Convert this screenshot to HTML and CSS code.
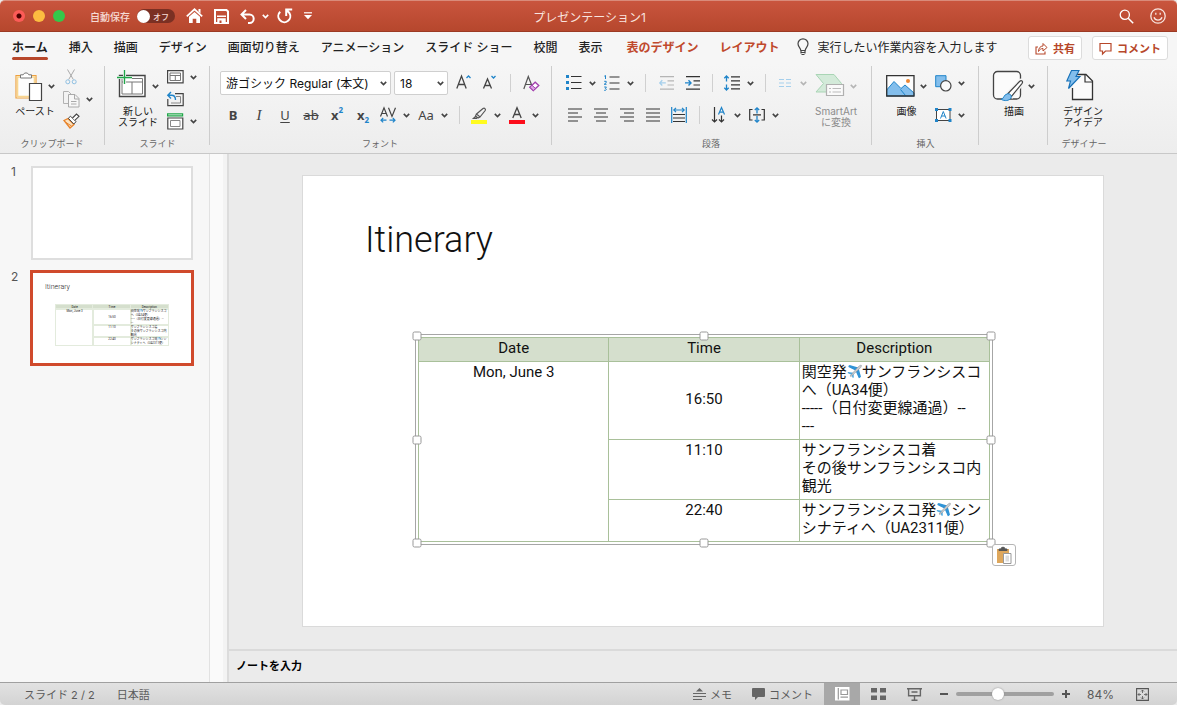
FILE: index.html
```html
<!DOCTYPE html>
<html lang="ja">
<head>
  <meta charset="UTF-8" />
  <meta name="viewport" content="width=device-width, initial-scale=1" />
  <title>プレゼンテーション1</title>
  <link rel="stylesheet" href="styles.css">
</head>
<body>
  <svg class="sprite" aria-hidden="true">
    <symbol id="caret" viewBox="0 0 7 5"><path d="M0.8 0.9 3.5 3.6 6.2 0.9" fill="none" stroke="currentColor" stroke-width="1.6"/></symbol>
    <symbol id="plane" viewBox="0 0 16 16">
      <path d="M9 7 1.5 3.2 3 2.2 11.5 4.2zM9 7l3.6 8.3 1.2-1.2L12 5z" fill="#2f93d6"/>
      <path d="M9.500 6.500 1 2.500 2.800 1 12 3.600zM9.500 6.500l3.800 8.800 1.600-1.700-2.500-9.200z" fill="#2f93d6"/>
      <path d="M6.8 9.3 1.2 8.6.6 9.6 4.6 11.4 6.2 15l1-.6-.2-4.8z" fill="#4aa8e0"/>
      <path d="M3.2 12.8 12 3c1.2-1.3 2.9-2 3.3-1.6.4.4-.3 2.1-1.6 3.3L4.2 13.4z" fill="#c9ced3" stroke="#8b9299" stroke-width=".6"/>
    </symbol>
  </svg>

  <!-- Title bar -->
  <header class="titlebar">
    <div class="titlebar-left">
      <div class="lights">
        <button class="light close" aria-label="閉じる"></button>
        <button class="light minimize" aria-label="しまう"></button>
        <button class="light zoom" aria-label="フルスクリーン"></button>
      </div>
      <label class="autosave">自動保存
        <span class="toggle"><input type="checkbox" role="switch"><span>オフ</span></span>
      </label>
      <button class="title-btn" aria-label="ホーム"><svg width="17" height="16" viewBox="0 0 17 16"><path d="M.8 8.3 8.5 1.3l7.7 7" fill="none" stroke="#fff" stroke-width="1.8"/><path d="M3 8.8 8.5 4 14 8.8V15h-3.700v-4.200H6.700V15H3z" fill="#fff"/><path d="M12.500 1h2v4.500l-2-1.800z" fill="#fff"/></svg></button>
      <button class="title-btn" aria-label="保存"><svg width="15" height="15" viewBox="0 0 15 15"><path d="M1 1h11.500L14 2.500V14H1z" fill="none" stroke="#fff" stroke-width="2"/><path d="M3 7.200h9M4 10h7v4H4z" stroke="#fff" stroke-width="1.500" fill="#fff"/><path d="M5.500 11.500h2V14h-2z" fill="#bd4b32"/></svg></button>
      <div class="undo">
        <button class="title-btn" aria-label="元に戻す"><svg width="16" height="15" viewBox="0 0 16 15"><path d="M6 1 1.500 5.500 6 10M2 5.500h7.500a4.200 4.200 0 0 1 0 8.400H8" fill="none" stroke="#fff" stroke-width="2"/></svg></button>
        <button class="title-btn" aria-label="元に戻す履歴"><svg width="7" height="5"><use href="#caret"/></svg></button>
      </div>
      <button class="title-btn" aria-label="やり直し"><svg width="16" height="16" viewBox="0 0 16 16"><path d="M3.200 3.800a6 6 0 1 0 9.200 1.200L9.800 2M9.200 8V1.500h6" fill="none" stroke="#fff" stroke-width="2"/></svg></button>
      <button class="title-btn" aria-label="カスタマイズ"><svg width="8" height="8" viewBox="0 0 8 8"><path d="M0 .8h8" stroke="#fff" stroke-width="1.200"/><path d="M0 3h8L4 7.200z" fill="#fff"/></svg></button>
    </div>
    <h1 class="doc-title">プレゼンテーション1</h1>
    <div class="titlebar-right">
      <button class="title-btn" aria-label="検索"><svg width="15" height="15" viewBox="0 0 15 15"><circle cx="5.800" cy="5.800" r="4.600" fill="none" stroke="#fff" stroke-width="1.300"/><path d="m9.200 9.200 5 5" stroke="#fff" stroke-width="1.500"/></svg></button>
      <button class="title-btn" aria-label="フィードバック"><svg width="16" height="16" viewBox="0 0 16 16"><circle cx="8" cy="8" r="7.200" fill="none" stroke="#f7e4df" stroke-width="1.300"/><path d="M5.800 4.800v2M10.200 4.800v2M4 9.200c1.200 3.800 6.800 3.800 8 0" fill="none" stroke="#f7e4df" stroke-width="1.300"/></svg></button>
    </div>
  </header>

  <!-- Tabs -->
  <div class="tabbar">
    <nav class="tabs">
      <button class="tab active">ホーム</button>
      <button class="tab">挿入</button>
      <button class="tab">描画</button>
      <button class="tab">デザイン</button>
      <button class="tab">画面切り替え</button>
      <button class="tab">アニメーション</button>
      <button class="tab">スライド ショー</button>
      <button class="tab">校閲</button>
      <button class="tab">表示</button>
    </nav>
    <nav class="tabs contextual">
      <button class="tab">表のデザイン</button>
      <button class="tab">レイアウト</button>
    </nav>
    <label class="tell-me">
      <svg width="12" height="18" viewBox="0 0 12 18"><path d="M3.800 12.500C3.800 10 1 9 1 5.800a5 5 0 0 1 10 0C11 9 8.200 10 8.200 12.500zM4 14.500h4M4.500 16.500h3M4 12.500v3M8 12.500v3" fill="none" stroke="#444" stroke-width="1.200"/></svg>
      <input type="text" placeholder="実行したい作業内容を入力します" aria-label="操作アシスト">
    </label>
    <div class="tab-actions">
      <button class="action"><svg width="13" height="13" viewBox="0 0 13 13"><path d="M3 5H1v7h9V9.500" fill="none" stroke="#b7472a" stroke-width="1.100"/><path d="M3.500 9.500C3.500 6 5.500 4 8 4V1.500L12 5.500 8 9V6.500C6 6.500 4.500 7.500 3.500 9.500z" fill="none" stroke="#b7472a"/></svg>共有</button>
      <button class="action"><svg width="13" height="13" viewBox="0 0 13 13"><path d="M1 1.500h11v7.500H6.500L3.500 12V9H1z" fill="none" stroke="#b7472a" stroke-width="1.200"/></svg>コメント</button>
    </div>
  </div>

  <!-- Ribbon -->
  <div class="ribbon">
    <section class="group clipboard">
      <div class="group-body">
        <button class="big">
          <span class="big-icon">
            <svg width="28" height="30" viewBox="0 0 28 30"><path d="M1 4.500h20V27H1z" fill="#fdfdfd" stroke="#eda03f" stroke-width="1.200"/><path d="M2.500 6h17v19.500h-17z" fill="none" stroke="#f8d68f" stroke-width="1.600"/><path d="M5.500 7V3.800h2.700a3 3 0 0 1 5.600 0h2.700V7z" fill="#fff" stroke="#777"/><path d="M14.500 12.500h12v17h-12z" fill="#fff" stroke="#444" stroke-width="1.200"/></svg>
            <svg class="caret" width="7" height="5"><use href="#caret"/></svg>
          </span>
          ペースト
        </button>
        <div class="small-col">
          <button class="small" aria-label="切り取り"><svg width="17" height="16" viewBox="0 0 17 16"><path d="M4.500.5l5.800 10M11.500.5l-5.800 10" fill="none" stroke="#aaa"/><circle cx="4.800" cy="12.800" r="2" fill="none" stroke="#8fc0e2"/><circle cx="11.200" cy="12.800" r="2" fill="none" stroke="#8fc0e2"/></svg></button>
          <button class="small" aria-label="コピー"><svg width="17" height="17" viewBox="0 0 17 17"><path d="M5 12.500H.5V.5h5l3 3" fill="none" stroke="#b2b2b2"/><path d="M5.500 3.500h6.500l4 4v8.500H5.500zM11.500 3.500v4.500H16M8 10.500h5.500M8 13h5.500" fill="#f7f7f7" stroke="#aaa"/></svg><svg class="caret" width="7" height="5"><use href="#caret"/></svg></button>
          <button class="small" aria-label="書式のコピー"><svg width="17" height="16" viewBox="0 0 17 16"><path d="M1 7.500 5 5.500l6 6L7 15z" fill="#fbe3c2" stroke="#e8832a" stroke-width="1.300"/><path d="M3 9.500 8.500 13" stroke="#e8832a"/><path d="M5.300 5.300 7.500 3.200l5.500 5.500-2.200 2.300z" fill="#fff" stroke="#444"/><path d="m9.500 5 4-4L16 3.300l-4.200 4" fill="#fff" stroke="#444" stroke-width="1.100"/></svg></button>
        </div>
      </div>
      <h2 class="group-label">クリップボード</h2>
    </section>

    <section class="group slides">
      <div class="group-body">
        <button class="big">
          <span class="big-icon">
            <svg width="30" height="30" viewBox="0 0 30 30"><path d="M2.500 4.500h25.500v21H2.500z" fill="#fff" stroke="#444" stroke-width="1.400"/><path d="M5 7.500h20.500v15.500H5zM5 11h20.500M15 11v12" fill="none" stroke="#777"/><path d="M7.500 0v13M0 6.500h15" stroke="#f5f5f5" stroke-width="3"/><path d="M7.500-1v14M0 6.500h15" stroke="#1fa648" stroke-width="1.300"/></svg>
            <svg class="caret" width="7" height="5"><use href="#caret"/></svg>
          </span>
          新しい<br>スライド
        </button>
        <div class="small-col">
          <button class="small" aria-label="レイアウト"><svg width="17" height="14" viewBox="0 0 17 14"><path d="M.6.600h15.500v12.300H.6z" fill="#fff" stroke="#444" stroke-width="1.200"/><path d="M3 3h10.500v7.500H3zM3 5.500h10.500M8.300 5.500v5" fill="none" stroke="#777"/></svg><svg class="caret" width="7" height="5"><use href="#caret"/></svg></button>
          <button class="small" aria-label="リセット"><svg width="17" height="15" viewBox="0 0 17 15"><path d="M8 1.600h8.200v12H.8V7" fill="none" stroke="#444" stroke-width="1.200"/><path d="M9 4.500h4.500V11H4" fill="none" stroke="#888"/><path d="M4 0 .8 3.300 4 6.500M1 3.300h3.500c2.500 0 4 1.700 4 4.700" fill="none" stroke="#1f84c9" stroke-width="1.400"/></svg></button>
          <button class="small" aria-label="セクション"><svg width="17" height="17" viewBox="0 0 17 17"><path d="M.6.800h15v2H.6z" fill="#fff" stroke="#1fa648" stroke-width="1.200"/><path d="M.8 5h15v11H.8z" fill="#fff" stroke="#444" stroke-width="1.200"/><path d="M3.500 7.500H13V13.500H3.500z" fill="none" stroke="#888"/></svg><svg class="caret" width="7" height="5"><use href="#caret"/></svg></button>
        </div>
      </div>
      <h2 class="group-label">スライド</h2>
    </section>

    <section class="group font">
      <div class="group-body rows">
        <div class="row top">
          <span class="select-wrap family">
            <select aria-label="フォント名"><option>游ゴシック Regular (本文)</option></select>
            <svg class="caret" width="7" height="5"><use href="#caret"/></svg>
          </span>
          <span class="select-wrap size">
            <select aria-label="フォント サイズ"><option>18</option></select>
            <svg class="caret" width="7" height="5"><use href="#caret"/></svg>
          </span>
          <button class="tool" aria-label="フォントの拡大"><svg width="16" height="16" viewBox="0 0 16 16"><path d="M.8 13.500 5.500 1 10.200 13.500M2.500 9.500h6" fill="none" stroke="#444" stroke-width="1.300"/><path d="m10.500 3 2-2 2 2" fill="none" stroke="#1f84c9" stroke-width="1.300"/></svg></button>
          <button class="tool" aria-label="フォントの縮小"><svg width="16" height="16" viewBox="0 0 16 16"><path d="M1.500 13.500 5.500 4 9.500 13.500M3 10.500h5" fill="none" stroke="#444" stroke-width="1.300"/><path d="m9.500 1 2 2 2-2" fill="none" stroke="#1f84c9" stroke-width="1.300"/></svg></button>
          <span class="sep"></span>
          <button class="tool" aria-label="書式のクリア"><svg width="17" height="17" viewBox="0 0 17 17"><path d="M.8 14 5.300 1.500 9 11M2.500 9.500h6" fill="none" stroke="#555" stroke-width="1.200"/><path d="m6.800 12.200 5.400-5 3.600 3.400-5.500 5z" fill="#fff" stroke="#a33fae" stroke-width="1.300"/><path d="m6.800 12.200 2.200-2 3.500 3.400-2.200 2z" fill="#dba6e2" stroke="#a33fae"/></svg></button>
        </div>
        <div class="row bottom">
          <button class="tool text bold">B</button>
          <button class="tool text italic">I</button>
          <button class="tool text underline">U</button>
          <button class="tool text strike">ab</button>
          <button class="tool text script">x<sup>2</sup></button>
          <button class="tool text script">x<sub>2</sub></button>
          <button class="split" aria-label="文字の間隔"><svg width="16" height="16" viewBox="0 0 16 16"><path d="M.5 9.500 4 .8l3.500 8.700M1.800 6.500h4.400M8.500.800 12 9.500 15.500.8" fill="none" stroke="#444" stroke-width="1.200"/><path d="M1 13.200h5.500M3.200 11 1 13.200l2.200 2.200M9.500 13.200H15M12.800 11l2.200 2.200-2.200 2.200" fill="none" stroke="#1f84c9" stroke-width="1.200"/></svg><svg class="caret" width="7" height="5"><use href="#caret"/></svg></button>
          <button class="split text case"><span>Aa</span><svg class="caret" width="7" height="5"><use href="#caret"/></svg></button>
          <span class="sep"></span>
          <button class="split" aria-label="蛍光ペン"><svg width="16" height="17" viewBox="0 0 16 17"><path d="m5.500 7 6.500-5.500c1.500-1 3 .5 2.200 2L9 10zM5.500 7 4.500 9 7 11l2-1M4.500 9.500 2.500 11.300H6" fill="none" stroke="#555" stroke-width="1.200"/><path d="M0 13h16v4H0z" fill="#fffb1f"/></svg><svg class="caret" width="7" height="5"><use href="#caret"/></svg></button>
          <button class="split" aria-label="フォントの色"><svg width="16" height="17" viewBox="0 0 16 17"><path d="M3.800 11 8 .8 12.200 11M5.300 7.500h5.400" fill="none" stroke="#444" stroke-width="1.300"/><path d="M0 13h16v4H0z" fill="#fc0d1b"/></svg><svg class="caret" width="7" height="5"><use href="#caret"/></svg></button>
        </div>
      </div>
      <h2 class="group-label">フォント</h2>
    </section>

    <section class="group paragraph">
      <div class="group-body">
        <div class="rows">
          <div class="row top">
            <button class="split" aria-label="箇条書き"><svg width="16" height="16" viewBox="0 0 16 16"><path d="M0 0h3v3H0zM0 6h3v3H0zM0 12h3v3H0z" fill="#1f84c9"/><path d="M5 1.500h10.500M5 7.500h10.500M5 13.500h10.500" stroke="#333" stroke-width="1.200"/></svg><svg class="caret" width="7" height="5"><use href="#caret"/></svg></button>
            <button class="split" aria-label="段落番号"><svg width="16" height="17" viewBox="0 0 16 17"><path d="M.3 1.200 1.500.5V4M.2 6.300h2v1.400l-2 1.600h2.300M.2 12h2.200l-1 1.500c1.500.2 1.200 2.300-1.200 1.800" fill="none" stroke="#1f84c9"/><path d="M5.500 2h10M5.500 8h10M5.500 14h10" stroke="#333" stroke-width="1.200"/></svg><svg class="caret" width="7" height="5"><use href="#caret"/></svg></button>
            <span class="sep"></span>
            <button class="tool" aria-label="インデントを減らす" disabled><svg width="15" height="14" viewBox="0 0 15 14"><path d="M1 .600h14M8.500 4.800H15M8.500 9H15M1 13.200h14" stroke="#b5b5b5" stroke-width="1.200"/><path d="M.8 6.900h6M3.300 4.300.8 6.900l2.500 2.600" fill="none" stroke="#a5cfec" stroke-width="1.300"/></svg></button>
            <button class="tool" aria-label="インデントを増やす"><svg width="15" height="14" viewBox="0 0 15 14"><path d="M1 .600h14M8.500 4.800H15M8.500 9H15M1 13.200h14" stroke="#333" stroke-width="1.200"/><path d="M0 6.900h6M3.500 4.300 6 6.900 3.500 9.500" fill="none" stroke="#1f84c9" stroke-width="1.400"/></svg></button>
            <span class="sep"></span>
            <button class="split" aria-label="行間"><svg width="16" height="16" viewBox="0 0 16 16"><path d="M2.500 6.500V1M.3 3.200 2.500 1l2.200 2.200M2.500 9.500V15M.3 12.800 2.500 15l2.200-2.200" fill="none" stroke="#1f84c9" stroke-width="1.300"/><path d="M7 1.800h9M7 5.800h9M7 9.800h9M7 13.800h9" stroke="#333" stroke-width="1.200"/></svg><svg class="caret" width="7" height="5"><use href="#caret"/></svg></button>
            <span class="sep"></span>
            <button class="split" aria-label="段組み" disabled><svg width="16" height="8" viewBox="0 0 16 8"><path d="M2 .5h5M2 4h5M2 7.500h5M9 .5h5M9 4h5M9 7.500h5" stroke="#a5cfec" stroke-width="1.200"/></svg><svg class="caret" width="7" height="5"><use href="#caret"/></svg></button>
          </div>
          <div class="row bottom">
            <button class="tool" aria-label="左揃え"><svg width="14" height="14" viewBox="0 0 14 14"><path d="M0 1h14M0 5h10M0 9h14M0 13h10" stroke="#333" stroke-width="1.200"/></svg></button>
            <button class="tool" aria-label="中央揃え"><svg width="14" height="14" viewBox="0 0 14 14"><path d="M0 1h14M2 5h10M0 9h14M2 13h10" stroke="#333" stroke-width="1.200"/></svg></button>
            <button class="tool" aria-label="右揃え"><svg width="14" height="14" viewBox="0 0 14 14"><path d="M0 1h14M4 5h10M0 9h14M4 13h10" stroke="#333" stroke-width="1.200"/></svg></button>
            <button class="tool" aria-label="両端揃え"><svg width="14" height="14" viewBox="0 0 14 14"><path d="M0 1h14M0 5h14M0 9h14M0 13h14" stroke="#333" stroke-width="1.200"/></svg></button>
            <button class="tool" aria-label="均等割り付け"><svg width="16" height="16" viewBox="0 0 16 16"><path d="M.7 0v16M15.300 0v16M3 3h10M5 .8 2.800 3 5 5.200M11 .8 13.200 3 11 5.200" fill="none" stroke="#1f84c9" stroke-width="1.200"/><path d="M2 7.500h12M2 11h12M2 14.500h12" stroke="#333" stroke-width="1.200"/></svg></button>
            <span class="sep"></span>
            <button class="split" aria-label="文字列の方向"><svg width="16" height="16" viewBox="0 0 16 16"><path d="M3.500 0v15M1 12.500 3.500 15 6 12.500M10.500 8.500V15M8 12.500l2.500 2.500 2.500-2.500" fill="none" stroke="#333" stroke-width="1.200"/><path d="m7.500 7.500 3-7 3 7M8.500 5.200h4" fill="none" stroke="#1f84c9" stroke-width="1.200"/></svg><svg class="caret" width="7" height="5"><use href="#caret"/></svg></button>
            <button class="split" aria-label="文字の配置"><svg width="16" height="16" viewBox="0 0 16 16"><path d="M3.500 2.500H.7v10.500h2.800M12.500 2.500h2.800v10.500h-2.800M4 7.800h8" fill="none" stroke="#333" stroke-width="1.200"/><path d="M8 6.500V.800M5.800 3 8 .8 10.200 3M8 9v6M5.800 13 8 15.200l2.200-2.200" fill="none" stroke="#1f84c9" stroke-width="1.300"/></svg><svg class="caret" width="7" height="5"><use href="#caret"/></svg></button>
          </div>
        </div>
        <button class="big" disabled>
          <span class="big-icon">
            <svg width="30" height="30" viewBox="0 0 30 30"><path d="M1 3.500h18l7.500 9-7.500 8.500H1l7.500-8.500z" fill="#d3ead9" stroke="#a9d5b5"/><path d="M11.500 13.500h17v11h-17z" fill="#fafafa" stroke="#b0b0b0" stroke-width="1.200"/><path d="M14 17.500h2M17.500 17.500H26M14 21h2M17.500 21H26" stroke="#bbb"/></svg>
            <svg class="caret" width="7" height="5"><use href="#caret"/></svg>
          </span>
          SmartArt<br>に変換
        </button>
      </div>
      <h2 class="group-label">段落</h2>
    </section>

    <section class="group insert">
      <div class="group-body">
        <button class="big">
          <span class="big-icon">
            <svg width="29" height="22" viewBox="0 0 29 22"><path d="M.7.700h27.300v20.300H.7z" fill="#fdfdfd"/><path d="M.7 15 8 6.500l7 7 4-3.500 9 8v3H.7z" fill="#83beec" stroke="#1f84c9"/><path d="m14.500 14.500 5 6" stroke="#1f84c9"/><circle cx="22" cy="6" r="2" fill="#ed8733"/><path d="M.7.700h27.300v20.300H.7z" fill="none" stroke="#333" stroke-width="1.300"/></svg>
            <svg class="caret" width="7" height="5"><use href="#caret"/></svg>
          </span>
          画像
        </button>
        <div class="rows">
          <div class="row top"><button class="small" aria-label="図形"><svg width="17" height="17" viewBox="0 0 17 17"><path d="M.7.700h10.300v11H.7z" fill="#83beec" stroke="#1f84c9"/><circle cx="10.800" cy="10.800" r="5.200" fill="#fafafa" stroke="#444" stroke-width="1.200"/></svg><svg class="caret" width="7" height="5"><use href="#caret"/></svg></button></div>
          <div class="row bottom"><button class="small" aria-label="テキスト ボックス"><svg width="17" height="14" viewBox="0 0 17 14"><path d="M1.500 1.500h13.500v11H1.500z" fill="#fff" stroke="#444"/><path d="M0 0h3v3H0zM13.500 0h3v3h-3zM0 11h3v3H0zM13.500 11h3v3h-3z" fill="#1f84c9"/><path d="m5.500 10.500 2.800-7 2.800 7M6.500 8h3.600" fill="none" stroke="#1f84c9"/></svg><svg class="caret" width="7" height="5"><use href="#caret"/></svg></button></div>
        </div>
      </div>
      <h2 class="group-label">挿入</h2>
    </section>

    <section class="group drawing">
      <div class="group-body">
        <button class="big">
          <span class="big-icon">
            <svg width="30" height="30" viewBox="0 0 30 30"><path d="M24 28H4.500a4 4 0 0 1-4-4V4.500a4 4 0 0 1 4-4h19a4 4 0 0 1 4 4V24a4 4 0 0 1-4 4" fill="#fbfbfb" stroke="#444" stroke-width="1.300"/><path d="M15 22.500 26.500 10.500c2-1.800 3.800-.2 2.600 1.800L19 25z" fill="#fff" stroke="#f5f5f5" stroke-width="4"/><path d="M15 22.500 26.500 10.500c2-1.800 3.800-.2 2.600 1.800L18.500 25.500z" fill="#fff" stroke="#444" stroke-width="1.200"/><path d="M8 28.300c3 0 2.500-5 6.500-5.500 3-.3 4.500 2 3.500 4-1.500 3.200-6.500 3.500-10 1.500z" fill="#83beec" stroke="#1f84c9"/></svg>
            <svg class="caret" width="7" height="5"><use href="#caret"/></svg>
          </span>
          描画
        </button>
      </div>
    </section>

    <section class="group designer">
      <div class="group-body">
        <button class="big">
          <span class="big-icon">
            <svg width="34" height="32" viewBox="0 0 34 32"><path d="M9 4.500h11l6.500 6.500v18.500H6.500V18" fill="#fbfbfb" stroke="#333" stroke-width="1.300"/><path d="M19 4v8h7.500" fill="none" stroke="#333" stroke-width="1.200"/><path d="M5.500.5h7.500l-3 6h4L2.500 18.500 4.500 11H.8z" fill="#83beec" stroke="#1570b8" stroke-width="1.100"/></svg>
          </span>
          デザイン<br>アイデア
        </button>
      </div>
      <h2 class="group-label">デザイナー</h2>
    </section>
  </div>

  <!-- Workspace -->
  <main class="workspace">
    <aside class="thumbs">
      <ol class="thumb-list">
        <li class="thumb"><span class="thumb-no">1</span><div class="thumb-slide"></div></li>
        <li class="thumb selected"><span class="thumb-no">2</span>
          <div class="thumb-slide">
            <p class="thumb-title">Itinerary</p>
            <table class="thumb-table">
              <tr><th>Date</th><th>Time</th><th>Description</th></tr>
              <tr><td rowspan="3">Mon, June 3</td><td class="middle">16:50</td><td>関空発<svg class="plane" role="img" aria-label="飛行機"><use href="#plane"/></svg>サンフランシスコ<br>へ（UA34便）<br>-----（日付変更線通過）--<br>---</td></tr>
              <tr><td>11:10</td><td>サンフランシスコ着<br>その後サンフランシスコ内<br>観光</td></tr>
              <tr><td>22:40</td><td>サンフランシスコ発<svg class="plane" role="img" aria-label="飛行機"><use href="#plane"/></svg>シン<br>シナティへ（UA2311便）</td></tr>
            </table>
          </div>
        </li>
      </ol>
    </aside>
    <div class="gutter"></div>
    <div class="editor">
      <div class="canvas">
        <article class="slide">
          <h2 class="slide-title">Itinerary</h2>
          <div class="table-frame">
            <table class="itinerary">
              <tr><th>Date</th><th>Time</th><th>Description</th></tr>
              <tr><td rowspan="3">Mon, June 3</td><td class="middle">16:50</td><td>関空発<svg class="plane" role="img" aria-label="飛行機"><use href="#plane"/></svg>サンフランシスコ<br>へ（UA34便）<br>-----（日付変更線通過）--<br>---</td></tr>
              <tr><td>11:10</td><td>サンフランシスコ着<br>その後サンフランシスコ内<br>観光</td></tr>
              <tr><td>22:40</td><td>サンフランシスコ発<svg class="plane" role="img" aria-label="飛行機"><use href="#plane"/></svg>シン<br>シナティへ（UA2311便）</td></tr>
            </table>
            <div class="handles">
              <i class="handle nw"></i><i class="handle n"></i><i class="handle ne"></i>
              <i class="handle w"></i><i class="handle e"></i>
              <i class="handle sw"></i><i class="handle s"></i><i class="handle se"></i>
            </div>
            <button class="paste-options" aria-label="貼り付けのオプション"><svg width="15" height="17" viewBox="0 0 15 17"><path d="M0 2h12v14H0z" fill="#dea75c"/><path d="M2 3.500V2h2a2 1.800 0 0 1 4 0h2v1.500z" fill="#555" stroke="#555"/><path d="M6.500 6.500H14V16.500H6.500z" fill="#fff" stroke="#999"/><path d="M8.500 8.500H12V14.500H8.500z" fill="#ddd"/></svg></button>
          </div>
        </article>
      </div>
      <div class="notes">ノートを入力</div>
    </div>
  </main>

  <!-- Status bar -->
  <footer class="statusbar">
    <span>スライド 2 / 2</span>
    <span>日本語</span>
    <div class="status-right">
      <button class="status-btn"><svg width="13" height="12" viewBox="0 0 13 12"><path d="M0 5.500h13M0 8.500h13M0 11.500h9" stroke="#666" stroke-width="1.200"/><path d="m3 3.500 3.500-3.500L10 3.500z" fill="#666"/></svg>メモ</button>
      <button class="status-btn"><svg width="13" height="12" viewBox="0 0 13 12"><path d="M1 0h11a1 1 0 0 1 1 1v7a1 1 0 0 1-1 1H6l-3 3V9H1a1 1 0 0 1-1-1V1a1 1 0 0 1 1-1z" fill="#666"/></svg>コメント</button>
      <div class="views">
        <button class="view active" aria-label="標準表示"><svg width="15" height="14" viewBox="0 0 15 14"><path d="M0 0h14.500v13.500H0z" fill="#fff"/><path d="M3.300 1v11.500M6 3h6.500v4.500H6zM5.500 10.200H13" fill="none" stroke="#999" stroke-width="1.200"/></svg></button>
        <button class="view" aria-label="スライド一覧"><svg width="15" height="12" viewBox="0 0 15 12"><path d="M0 0h6v4.500H0zM9 0h6v4.500H9zM0 7.500h6V12H0zM9 7.500h6V12H9z" fill="#666"/></svg></button>
        <button class="view" aria-label="スライド ショー"><svg width="15" height="13" viewBox="0 0 15 13"><path d="M0 .800h15M1.600 1v6.800h11.800V1M4.500 4h6M7.500 8v4M4.500 12.200h6" fill="none" stroke="#666" stroke-width="1.400"/></svg></button>
      </div>
      <button class="zoom-btn" aria-label="縮小"><svg width="8" height="8" viewBox="0 0 8 8"><path d="M0 4h8" stroke="#555" stroke-width="2"/></svg></button>
      <input class="zoom-slider" type="range" min="0" max="100" value="42" aria-label="ズーム">
      <button class="zoom-btn" aria-label="拡大"><svg width="8" height="8" viewBox="0 0 8 8"><path d="M0 4h8M4 0v8" stroke="#555" stroke-width="2"/></svg></button>
      <span class="zoom-value">84%</span>
      <button class="zoom-btn" aria-label="ウィンドウに合わせる"><svg width="13" height="13" viewBox="0 0 13 13"><path d="M.6.600h11.800v11.800H.6z" fill="none" stroke="#555" stroke-width="1.100"/><path d="M6.500 2v3M5 3.500 6.500 2 8 3.500M6.500 11V8M5 9.500 6.500 11 8 9.500M2 6.500h3M3.500 5 2 6.500 3.500 8M11 6.500H8M9.500 5 11 6.500 9.500 8" fill="none" stroke="#555" stroke-width=".8"/></svg></button>
    </div>
  </footer>
</body>
</html>
```
FILE: styles.css
```css
* {
  box-sizing: border-box;
}
body {
  margin: 0;
  height: 100vh;
  display: flex;
  flex-direction: column;
  font-family: Inter, "Noto Sans CJK JP", sans-serif;
  font-size: 12px;
  color: #222;
  background: #ebebeb;
  overflow: hidden;
}
h1, h2, p, ol {
  margin: 0;
  padding: 0;
}
button, input, select {
  font: inherit;
  color: inherit;
  border: 0;
  margin: 0;
  padding: 0;
  background: none;
}
svg {
  display: block;
  flex: none;
  overflow: visible;
}
.sprite {
  position: absolute;
  width: 0;
  height: 0;
}

/* title bar */
.titlebar {
  flex: none;
  height: 32px;
  display: grid;
  grid-template-columns: 1fr auto 1fr;
  align-items: center;
  padding: 0 11px 0 13px;
  background: linear-gradient(#c9553e, #b6472d);
  border-top: 1px solid #d98b7a;
  border-bottom: 1px solid #9c3a24;
  border-radius: 5px 5px 0 0;
  color: #fff;
}
.titlebar-left, .titlebar-right {
  display: flex;
  align-items: center;
}
.titlebar-left {
  gap: 11px;
}
.titlebar-right {
  justify-content: flex-end;
  gap: 16px;
}
.lights {
  display: flex;
  gap: 8px;
  margin-right: 14px;
}
.light {
  width: 12px;
  height: 12px;
  border-radius: 50%;
}
.close {
  background: radial-gradient(#4d0000 0 2px, #fc5b57 3px);
}
.minimize {
  background: #fdbc40;
}
.zoom {
  background: #34c84a;
}
.autosave {
  display: flex;
  align-items: center;
  gap: 7px;
  font-size: 10px;
  font-weight: 500;
  color: #f6dcd5;
}
.toggle {
  display: flex;
  align-items: center;
  gap: 3px;
  width: 38px;
  height: 14px;
  border-radius: 7px;
  background: #7b3023;
  font-size: 8px;
}
.toggle input {
  appearance: none;
  width: 13px;
  height: 13px;
  border-radius: 50%;
  background: #fff;
}
.title-btn {
  display: flex;
}
.undo {
  display: flex;
  align-items: center;
  gap: 6px;
  margin-right: -3px;
}
.doc-title {
  font-size: 12px;
  font-weight: 400;
  color: #f9e4df;
}

/* tabs */
.tabbar {
  flex: none;
  display: flex;
  align-items: center;
  height: 32px;
  padding: 0 9px 0 12px;
  background: #f6f6f6;
}
.tabs {
  display: flex;
  gap: 21px;
}
.tab {
  position: relative;
  height: 30px;
  padding-bottom: 3px;
  font-weight: 500;
  white-space: nowrap;
}
.tab.active {
  font-weight: 700;
}
.tab.active::after {
  content: "";
  position: absolute;
  left: 0;
  right: 0;
  bottom: 3px;
  height: 3px;
  border-radius: 2px;
  background: #b7472a;
}
.contextual {
  margin-left: 24px;
}
.contextual .tab {
  color: #c0492c;
  font-weight: 700;
}
.tell-me {
  display: flex;
  align-items: center;
  gap: 9px;
  margin-left: 17px;
  padding-bottom: 2px;
}
.tell-me input {
  width: 190px;
}
.tell-me input::placeholder {
  color: #222;
  opacity: 1;
}
.tab-actions {
  display: flex;
  gap: 10px;
  margin-left: auto;
}
.action {
  display: flex;
  align-items: center;
  gap: 5px;
  height: 24px;
  padding: 0 6px;
  border: 1px solid #dcdcdc;
  border-radius: 3px;
  background: #fff;
  font-size: 11px;
  font-weight: 700;
  color: #b7472a;
}

/* ribbon */
.ribbon {
  flex: none;
  display: flex;
  padding: 2px 0 3px;
  background: linear-gradient(#f6f6f6, #ededed);
  border-bottom: 1px solid #c8c8c8;
}
.group {
  display: flex;
  flex-direction: column;
  flex: none;
  background: linear-gradient(#cdcdcd, #cdcdcd) right top / 1px 79px no-repeat;
}
.clipboard {
  width: 105px;
  padding-left: 15px;
}
.slides {
  width: 105px;
  padding-left: 12px;
}
.font {
  width: 342px;
  padding-left: 10px;
}
.paragraph {
  width: 320px;
  padding-left: 10px;
}
.insert {
  width: 107px;
  padding-left: 14px;
}
.drawing {
  width: 69px;
  padding-left: 14px;
}
.designer {
  width: 71px;
  padding-left: 15px;
  background: none;
}
.group-body {
  display: flex;
  gap: 8px;
  height: 72px;
}
.group-body.rows {
  gap: 0;
}
.paragraph .group-body {
  gap: 4px;
}
.group-label {
  font-size: 9px;
  line-height: 12px;
  font-weight: 400;
  text-align: center;
  color: #666;
}
.clipboard .group-label {
  margin-left: -16px;
}
.slides .group-label, .font .group-label, .paragraph .group-label {
  margin-left: -12px;
}
.insert .group-label, .designer .group-label {
  margin-left: -14px;
}
.caret {
  color: #444;
}
.big {
  display: flex;
  flex-direction: column;
  align-items: center;
  padding-top: 5px;
  font-size: 10px;
  line-height: 11px;
  white-space: nowrap;
}
.big-icon {
  display: flex;
  align-items: center;
  gap: 5px;
  height: 30px;
  margin-bottom: 5px;
}
button:disabled {
  color: #8c8c8c;
}
button:disabled .caret {
  color: #b5b5b5;
}
.small-col {
  display: flex;
  flex-direction: column;
}
.small {
  display: flex;
  align-items: center;
  gap: 6px;
  height: 22px;
}
.rows {
  display: flex;
  flex-direction: column;
}
.row {
  display: flex;
  align-items: center;
}
.row.top {
  height: 34px;
}
.row.bottom {
  height: 30px;
}
.tool {
  display: flex;
  align-items: center;
  justify-content: center;
  width: 26px;
  height: 24px;
}
.split {
  display: flex;
  align-items: center;
  gap: 7px;
  height: 24px;
  padding: 0 4px;
}
.sep {
  width: 1px;
  height: 18px;
  margin: 0 7px;
  background: #d0d0d0;
}
.text {
  font-family: "Noto Sans", sans-serif;
  font-size: 13px;
  color: #444;
}
.bold {
  font-weight: 700;
}
.italic {
  font-family: "Liberation Serif", serif;
  font-style: italic;
  font-size: 15px;
}
.underline {
  text-decoration: underline;
  text-underline-offset: 2px;
}
.strike {
  text-decoration: line-through;
}
.script {
  font-weight: 700;
}
.script sup, .script sub {
  padding: 3px 0;
  font-size: 8px;
  line-height: 8px;
  color: #1f84c9;
}
.script sup {
  align-self: flex-start;
}
.script sub {
  align-self: flex-end;
}
.case span {
  width: 16px;
}
.select-wrap {
  position: relative;
  margin-right: 3px;
}
.select-wrap select {
  appearance: none;
  width: 100%;
  height: 24px;
  padding: 0 5px;
  border: 1px solid #cfcfcf;
  border-radius: 2px;
  background: #fff;
  color: #111;
}
.select-wrap .caret {
  position: absolute;
  right: 4px;
  top: 10px;
  pointer-events: none;
}
.family {
  width: 171px;
}
.size {
  width: 54px;
}

/* workspace */
.workspace {
  flex: 1;
  min-height: 0;
  display: flex;
}
.thumbs {
  flex: none;
  width: 210px;
  padding: 14px 0 0 11px;
  background: #f7f7f7;
  border-right: 1px solid #e2e2e2;
}
.thumb-list {
  list-style: none;
  display: flex;
  flex-direction: column;
  gap: 15px;
}
.thumb {
  display: flex;
}
.thumb-no {
  width: 22px;
  line-height: 8px;
  color: #555;
}
.thumb-slide {
  width: 158px;
  height: 90px;
  padding: 9px 12px;
  background: #fff;
  box-shadow: 0 0 0 2px #dedede;
  font-family: Roboto, "Noto Sans CJK JP", sans-serif;
}
.selected .thumb-slide {
  box-shadow: 0 0 0 3px #d04a2c;
}
.thumb-title {
  font-size: 7px;
  line-height: 10px;
  font-weight: 300;
}
.thumb-table {
  width: 112px;
  margin: 13px 0 0 11px;
  table-layout: fixed;
  border-collapse: collapse;
  font-size: 3px;
  line-height: 4px;
}
.thumb-table th, .thumb-table td {
  padding: 0;
  box-shadow: 0 0 0 1px #e3ebdd;
  font-weight: 400;
  text-align: center;
  vertical-align: top;
  white-space: nowrap;
}
.thumb-table th {
  background: #d5dfcd;
}
.gutter {
  flex: none;
  width: 19px;
  background: #fafafa;
  border-right: 2px solid #dcdcdc;
  box-shadow: inset -4px 0 #f3f3f3;
}
.editor {
  flex: 1;
  min-width: 0;
  display: flex;
  flex-direction: column;
}
.canvas {
  flex: 1;
  min-height: 0;
  padding: 22px 74px 0;
}
.slide {
  aspect-ratio: 16 / 9;
  padding: 36px 62px;
  background: #fff;
  box-shadow: 0 0 0 1px #dadada;
  font-family: Roboto, "Noto Sans CJK JP", sans-serif;
  color: #111;
}
.slide-title {
  font-size: 36px;
  line-height: 56px;
  font-weight: 300;
}
.table-frame {
  position: relative;
  width: 578px;
  margin: 66px 0 0 50px;
  padding: 2px;
  border: 1px solid #a6a6a6;
}
.itinerary {
  width: 100%;
  table-layout: fixed;
  border-collapse: collapse;
  font-size: 15px;
  line-height: 18px;
}
.itinerary th, .itinerary td {
  padding: 1px 2px 4px;
  border: 1px solid #a9c09a;
  font-weight: 400;
  text-align: center;
  vertical-align: top;
  white-space: nowrap;
}
.itinerary .middle, .thumb-table .middle {
  vertical-align: middle;
}
.itinerary th {
  background: #d5dfcd;
}
.itinerary td:nth-child(3), .itinerary tr:nth-child(n+3) td:last-child,
.thumb-table td:nth-child(3), .thumb-table tr:nth-child(n+3) td:last-child {
  text-align: left;
}
.plane {
  display: inline-block;
  width: 1em;
  height: 1em;
  vertical-align: -0.12em;
}
.handles {
  position: absolute;
  inset: 1px;
}
.handle {
  position: absolute;
  width: 9px;
  height: 9px;
  border: 1px solid #999;
  border-radius: 2px;
  background: #fff;
  transform: translate(-50%, -50%);
}
.nw, .n, .ne {
  top: 0;
}
.w, .e {
  top: 50%;
}
.sw, .s, .se {
  top: 100%;
}
.nw, .w, .sw {
  left: 0;
}
.n, .s {
  left: 50%;
}
.ne, .e, .se {
  left: 100%;
}
.paste-options {
  position: absolute;
  left: 100%;
  top: 100%;
  display: flex;
  align-items: center;
  justify-content: center;
  width: 24px;
  height: 22px;
  border: 1px solid #b5b5b5;
  border-radius: 3px;
  background: #fff;
}
.notes {
  flex: none;
  height: 33px;
  padding: 0 7px;
  line-height: 31px;
  border-top: 2px solid #dadada;
  font-size: 11px;
  font-weight: 700;
  color: #000;
}

/* status bar */
.statusbar {
  flex: none;
  display: flex;
  align-items: center;
  gap: 22px;
  height: 23px;
  padding: 0 28px 0 24px;
  border-top: 1px solid #a0a0a0;
  border-radius: 0 0 5px 5px;
  background: linear-gradient(#e2e2e2, #d3d3d3);
  font-size: 11px;
  color: #5a5a5a;
}
.status-right {
  display: flex;
  align-items: center;
  height: 100%;
  margin-left: auto;
}
.status-btn {
  display: flex;
  align-items: center;
  gap: 4px;
  margin-right: 20px;
}
.views {
  display: flex;
  height: 100%;
  margin: 0 8px 0 -9px;
}
.view {
  display: flex;
  align-items: center;
  justify-content: center;
  width: 36px;
}
.view.active {
  background: #a8a8a8;
}
.zoom-btn {
  display: flex;
}
.zoom-slider {
  appearance: none;
  width: 98px;
  height: 4px;
  margin: 0 8px;
  border-radius: 2px;
  background: #a0a0a0;
}
.zoom-slider::-webkit-slider-thumb {
  appearance: none;
  width: 12px;
  height: 12px;
  border-radius: 50%;
  background: #fff;
  box-shadow: 0 0 2px #888;
}
.zoom-value {
  margin: 0 22px 0 17px;
  font-size: 12px;
}
```
